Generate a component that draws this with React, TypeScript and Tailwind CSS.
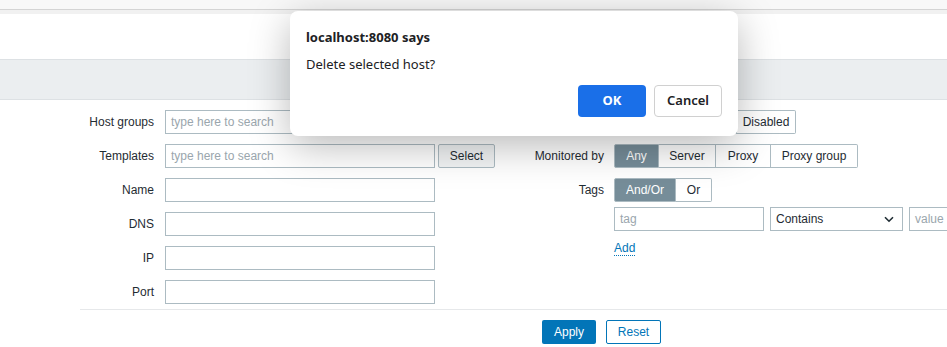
import React from "react";

const inputCls =
  "h-[24px] border border-[#acbbc2] bg-white px-[5px] flex items-center text-[12px] text-[#1f2c33]";

function Seg({ items, widths, active }: { items: string[]; widths: number[]; active: number }) {
  return (
    <div className="flex h-[24px]">
      {items.map((t, i) => (
        <div
          key={t}
          style={{ width: widths[i] }}
          className={
            "flex items-center justify-center border-y border-[#acbbc2] text-[12px] " +
            (i === 0 ? "border-l rounded-l-[2px] " : "") +
            (i === items.length - 1 ? "border-r rounded-r-[2px] " : "border-r ") +
            (i === active ? "bg-[#768d99] border-[#768d99] text-white" : "bg-white text-[#1f2c33]")
          }
        >
          {t}
        </div>
      ))}
    </div>
  );
}

export default function App() {
  const leftRows: { label: string; placeholder?: string; select?: boolean }[] = [
    { label: "Host groups", placeholder: "type here to search", select: true },
    { label: "Templates", placeholder: "type here to search", select: true },
    { label: "Name" },
    { label: "DNS" },
    { label: "IP" },
    { label: "Port" },
  ];

  return (
    <div
      className="relative w-[947px] h-[347px] overflow-hidden bg-white text-[#1f2c33]"
      style={{ fontFamily: '"Liberation Sans", Arial, sans-serif' }}
    >
      {/* top chrome */}
      <div className="h-[9px] bg-[#f8f8f8]" />
      <div className="h-[1px] bg-[#d4d4d4]" />
      <div className="h-[4px] bg-[#f1f1f1]" />
      <div className="h-[45px] bg-white" />
      <div className="h-[41px] bg-[#ebeef0] border-y border-[#dde1e4]" />

      {/* form */}
      <div className="ml-[80px] pt-[10px] border-b border-[#e6e8ea] pb-[5px] flex">
        <div className="w-[430px] shrink-0 flex flex-col gap-[10px]">
          {leftRows.map((r) => (
            <div key={r.label} className="flex items-center h-[24px]">
              <div className="w-[75px] text-right text-[12px] pr-[1px]">{r.label}</div>
              <div className="ml-[10px] flex gap-[3px]">
                <div className={inputCls + " w-[270px]"}>
                  {r.placeholder && <span className="text-[#9aa6ad]">{r.placeholder}</span>}
                </div>
                {r.select && (
                  <div className="h-[24px] w-[57px] border border-[#acbbc2] bg-[#f2f4f5] rounded-[2px] flex items-center justify-center text-[12px]">
                    Select
                  </div>
                )}
              </div>
            </div>
          ))}
        </div>

        <div className="flex-1 min-w-0 flex flex-col">
          <div className="flex items-center h-[24px]">
            <div className="w-[94px] shrink-0 text-right text-[12px]">Status</div>
            <div className="ml-[10px]">
              <Seg items={["Any", "Enabled", "Disabled"]} widths={[45, 78, 59]} active={0} />
            </div>
          </div>
          <div className="flex items-center h-[24px] mt-[10px]">
            <div className="w-[94px] shrink-0 text-right text-[12px]">Monitored by</div>
            <div className="ml-[10px]">
              <Seg items={["Any", "Server", "Proxy", "Proxy group"]} widths={[45, 57, 55, 87]} active={0} />
            </div>
          </div>
          <div className="flex items-center h-[24px] mt-[10px]">
            <div className="w-[94px] shrink-0 text-right text-[12px]">Tags</div>
            <div className="ml-[10px]">
              <Seg items={["And/Or", "Or"]} widths={[62, 36]} active={0} />
            </div>
          </div>
          <div className="flex items-center h-[24px] mt-[5px] ml-[104px] gap-[6px]">
            <div className={inputCls + " w-[150px] shrink-0"}>
              <span className="text-[#9aa6ad]">tag</span>
            </div>
            <div className={inputCls + " w-[133px] shrink-0 justify-between pr-[8px]"}>
              <span>Contains</span>
              <svg width="10" height="7" viewBox="0 0 10 7" fill="none">
                <path d="M1 1.2 L5 5.2 L9 1.2" stroke="#1f2c33" strokeWidth="1.6" />
              </svg>
            </div>
            <div className={inputCls + " w-[100px] shrink-0"}>
              <span className="text-[#9aa6ad]">value</span>
            </div>
          </div>
          <div className="ml-[104px] mt-[11px] h-[14px] flex items-center">
            <span className="text-[12px] text-[#0275b8] border-b border-dotted border-[#0275b8] leading-[13px]">
              Add
            </span>
          </div>
        </div>
      </div>

      {/* buttons */}
      <div className="flex gap-[10px] mt-[10px] ml-[542px]">
        <div className="h-[24px] w-[54px] bg-[#0275b8] rounded-[2px] text-white text-[12px] flex items-center justify-center">
          Apply
        </div>
        <div className="h-[24px] w-[55px] bg-white border border-[#0275b8] rounded-[2px] text-[#0275b8] text-[12px] flex items-center justify-center">
          Reset
        </div>
      </div>

      {/* browser dialog */}
      <div
        className="absolute left-[290px] top-[11px] w-[448px] h-[125px] bg-white rounded-[8px] shadow-[0_10px_40px_rgba(0,0,0,0.28)] px-[16px] pt-[17px]"
        style={{ fontFamily: '"Noto Sans", "Open Sans", sans-serif' }}
      >
        <div className="text-[13px] font-bold text-[#202124] leading-[18px]">localhost:8080 says</div>
        <div className="text-[13px] text-[#202124] leading-[18px] mt-[9px]">Delete selected host?</div>
        <div className="flex justify-end gap-[8px] mt-[12px]">
          <div className="w-[68px] h-[32px] rounded-[4px] bg-[#1a6fe8] text-white text-[13px] font-bold flex items-center justify-center">
            OK
          </div>
          <div className="w-[68px] h-[32px] rounded-[4px] border border-[#d0d0d0] bg-white text-[#202124] text-[13px] font-semibold flex items-center justify-center">
            Cancel
          </div>
        </div>
      </div>
    </div>
  );
}
